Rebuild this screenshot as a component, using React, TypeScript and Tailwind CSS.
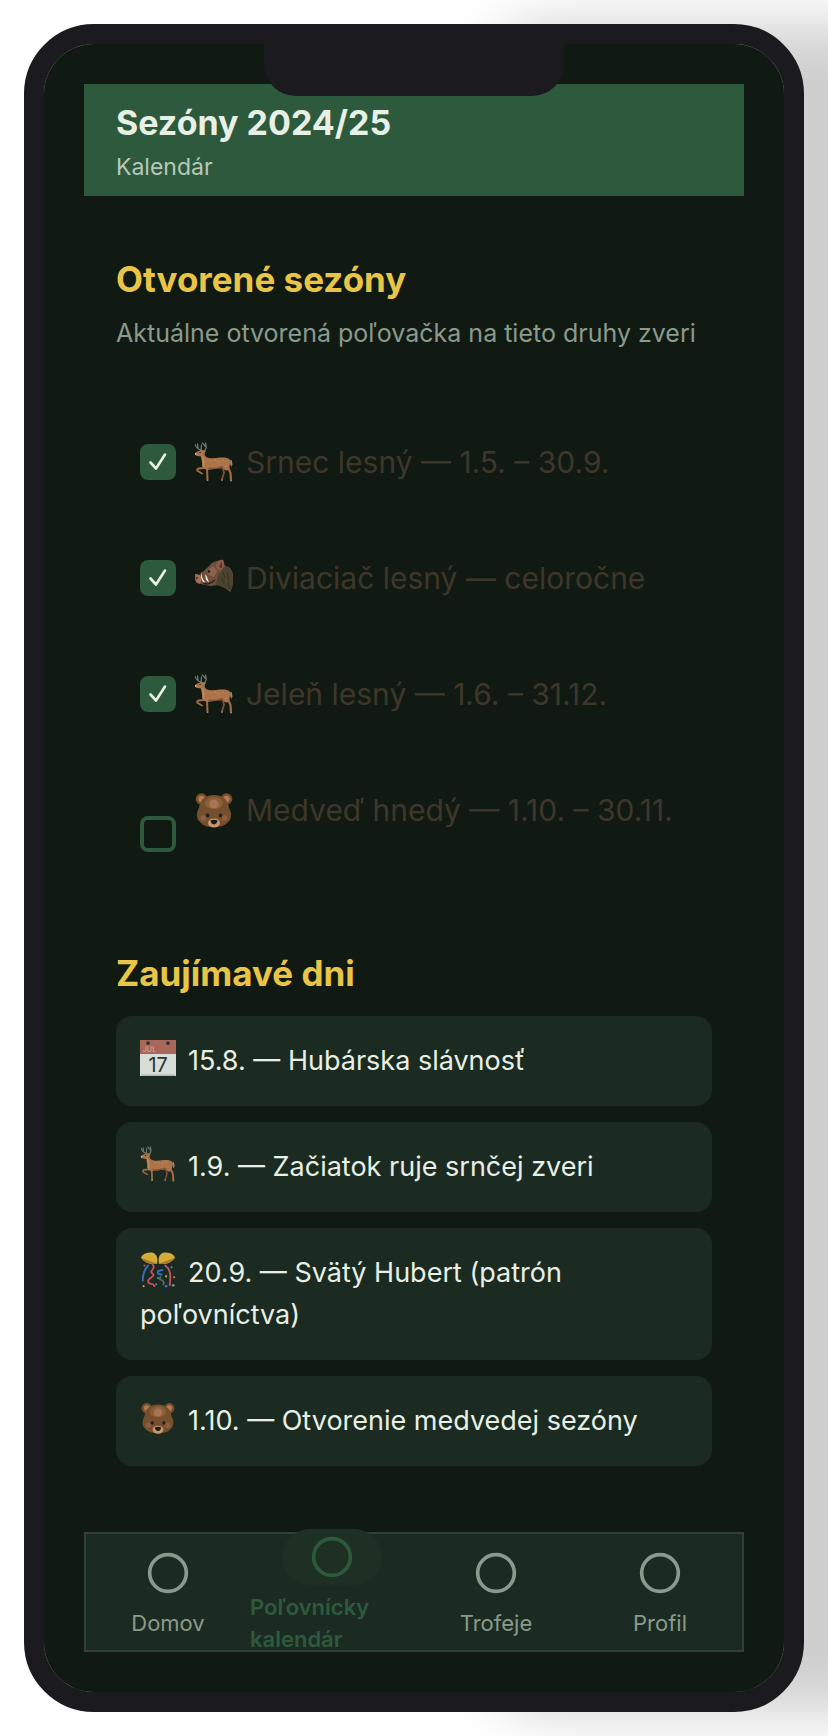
import type { ReactNode } from "react";
import { Circle } from "lucide-react";
import { clsx } from "clsx";

type EmojiName = "deer" | "boar" | "bear" | "calendar" | "confetti";

type Season = {
  id: string;
  emoji: EmojiName;
  label: string;
  open: boolean;
  tall?: boolean;
};

const seasons: Season[] = [
  { id: "srnec", emoji: "deer", label: "Srnec lesný — 1.5. – 30.9.", open: true },
  { id: "diviak", emoji: "boar", label: "Diviaciač lesný — celoročne", open: true },
  { id: "jelen", emoji: "deer", label: "Jeleň lesný — 1.6. – 31.12.", open: true },
  { id: "medved", emoji: "bear", label: "Medveď hnedý — 1.10. – 30.11.", open: false, tall: true },
];

const events: { emoji: EmojiName; label: string }[] = [
  { emoji: "calendar", label: "15.8. — Hubárska slávnosť" },
  { emoji: "deer", label: "1.9. — Začiatok ruje srnčej zveri" },
  { emoji: "confetti", label: "20.9. — Svätý Hubert (patrón poľovníctva)" },
  { emoji: "bear", label: "1.10. — Otvorenie medvedej sezóny" },
];

const tabs = [
  { label: "Domov", active: false },
  { label: "Poľovnícky kalendár", active: true },
  { label: "Trofeje", active: false },
  { label: "Profil", active: false },
];

const drawings: Record<EmojiName, ReactNode> = {
  deer: (
    <>
      <g fill="none" stroke="#6d766b" strokeWidth="1.3" strokeLinecap="round">
        <path d="M9 9C5 8 2 6 1.500 3M4 6.500L3.500 2M7 8L7.500 3M10 9C13 7 12.500 4 11.500 1M12 5L8.500 1" />
      </g>
      <g fill="none" stroke="#a26a43" strokeLinecap="round" strokeLinejoin="round">
        <path d="M29 26L30 31L28 37" stroke="#7d5136" strokeWidth="1.800" />
        <path d="M11 26L4 26.500L3 28.500L8 31.500" strokeWidth="1.800" />
        <path d="M13 26L13.500 38" strokeWidth="2" />
        <path d="M34 25L36.500 31L37 38" strokeWidth="2.200" />
      </g>
      <path
        d="M1 11.500C2.500 9.500 5 8.500 7 8.500L12 8.500L10.500 11.500C10.500 14 12 15.500 15 16C21 17 26 15 32 15.800C36.500 16.500 37.800 20 38 25C36.500 24 36 22 35.700 21C36 25 35 28 32.500 28.500C30 28 29 26 26 26C21 27 18 27 14 28C10 27.500 7.500 25 8 21L7 14.500C5 14 2 14 1 13Z"
        fill="#ac744a"
      />
      <path d="M15 25.500C20 26.500 25 25 28 24L31 27.500C28 26 22 26.500 14 28Z" fill="#805437" />
      <path d="M8.500 14L10 21L9 25" fill="none" stroke="#c98d60" strokeWidth="1.300" />
      <path d="M1 10.800L3 11.800L1.200 13Z" fill="#d9c8b1" />
      <circle cx="6" cy="10.500" r=".7" fill="#241b15" />
      <g fill="#d99755">
        <circle cx="17" cy="19" r=".6" />
        <circle cx="21" cy="18.500" r=".6" />
        <circle cx="25" cy="19.500" r=".6" />
        <circle cx="29" cy="18" r=".6" />
      </g>
      <path d="M37 18L38 23M13.500 37.500V39M28 37V39M37 38V39.500" stroke="#879087" strokeWidth="1.300" />
    </>
  ),
  boar: (
    <>
      <path
        d="M1 16L5 17L12 11L17 6C20 3 25 2 29 2L31 8C35 8 39 12 39 18L38.500 28L36 34L31 30L24 27L17 28L10 27L7 26L3 25L1 22Z"
        fill="#6d4f3c"
      />
      <path d="M24 17C27 14 30 9 32 8C37 10 39 15 39 22L38 30L36 34L31 29L22 27Z" fill="#4b432f" />
      <path d="M22 8C23 3 27 1 29 2C31 6 30 10 27 12C24 12 22 11 22 8Z" fill="#8c5c48" />
      <path d="M25 9L28 3.500L28 10Z" fill="#4a3228" />
      <path d="M13 13L19 8L23 13L20 19L15 17Z" fill="#8f6250" />
      <path d="M1 16L6 17L8 21L6 26L2 24Z" fill="#a36d57" />
      <circle cx="3" cy="20" r="1" fill="#442921" />
      <circle cx="15" cy="13.500" r="1.300" fill="#181b19" />
      <path d="M7 13C7.500 17 8 21 11 24C9 25 6.500 22 7 13ZM11.500 16C11 20 12 23 15 24.500C14 21 13 19 11.500 16Z" fill="#ecece3" />
      <path d="M9 25.500C14 27 17 25 21 22" fill="none" stroke="#241d19" strokeWidth="1.300" />
      <path d="M29 14L31 20M33 14L35 23M28 20L30 26M34 24L36 31" stroke="#33311f" strokeWidth="1" />
    </>
  ),
  bear: (
    <>
      <circle cx="7.500" cy="9" r="5.800" fill="#76502c" />
      <circle cx="32.500" cy="9" r="5.800" fill="#76502c" />
      <circle cx="7.500" cy="9" r="3.200" fill="#b87954" />
      <circle cx="32.500" cy="9" r="3.200" fill="#b87954" />
      <path d="M20 5C29 5 34 10 35 18C38 23 38 29 34 32C31 36 26 37 20 37C14 37 9 36 6 32C2 29 2 23 5 18C6 10 11 5 20 5Z" fill="#76502c" />
      <ellipse cx="20" cy="13" rx="9" ry="6" fill="#8c6039" />
      <circle cx="20" cy="14" r="4.500" fill="#ab7355" />
      <circle cx="9.500" cy="28" r="3" fill="#8f5d41" />
      <circle cx="30.500" cy="28" r="3" fill="#8f5d41" />
      <ellipse cx="20" cy="33" rx="6" ry="4.500" fill="#c7966b" />
      <circle cx="13.500" cy="25.500" r="1.900" fill="#20221e" />
      <circle cx="26.500" cy="25.500" r="1.900" fill="#20221e" />
      <path d="M16.500 30.500Q20 29 23.500 30.500Q23 34 20 34.500Q17 34 16.500 30.500Z" fill="#171b18" />
    </>
  ),
  calendar: (
    <>
      <path d="M0 0H40V40H0Z" fill="#d8ded7" />
      <path d="M0 0H40V15.500H0Z" fill="#a9665a" />
      <circle cx="9" cy="3.500" r="2" fill="#26372d" />
      <circle cx="31" cy="3.500" r="2" fill="#26372d" />
      <text x="3" y="13" fontSize="8" fontFamily="Inter, sans-serif" fill="#d6b08f">JUL</text>
      <path d="M1 39H39" stroke="#aab4ab" strokeWidth="1.500" />
      <text x="20" y="35.500" textAnchor="middle" fontSize="22" fontFamily="Inter, sans-serif" fill="#27352d">17</text>
    </>
  ),
  confetti: (
    <>
      <path d="M1 6C4 1 10 0 15 1C19 3 20 7 19 13C12 14 5 12 1 6Z" fill="#d6ac38" />
      <path d="M39 6C36 1 30 0 25 1C21 3 20 7 21 13C28 14 35 12 39 6Z" fill="#d6ac38" />
      <path d="M1 6C7 9 13 10 19 13C12 14 5 12 1 6ZM39 6C33 9 27 10 21 13C28 14 35 12 39 6Z" fill="#a67d2a" />
      <g fill="none" strokeLinecap="round" strokeWidth="2">
        <path d="M9 15C4 20 3 26 3 32" stroke="#386fc6" />
        <path d="M14 14C19 18 9 21 14 24C18 27 8 29 9 33C10 37 15 34 16 38" stroke="#cf4e60" />
        <path d="M28 15C35 20 34 27 33 37" stroke="#cf4e60" />
        <path d="M25 20C17 21 19 25 24 25" stroke="#386fc6" />
        <path d="M23 28C18 32 29 30 26 36" stroke="#596b5d" />
      </g>
      <circle cx="5" cy="15" r="1.200" fill="#cf4e60" />
      <circle cx="20" cy="29" r="1.200" fill="#38987a" />
      <circle cx="29" cy="27" r="1.200" fill="#dfb842" />
      <circle cx="38" cy="28" r="1.200" fill="#ad764c" />
      <circle cx="4" cy="38" r="1.200" fill="#d39c3e" />
      <circle cx="29" cy="38" r="1.500" fill="#386fc6" />
      <circle cx="37" cy="37" r="1.500" fill="#89927e" />
      <circle cx="18" cy="36" r="1.200" fill="#587d9c" />
      <circle cx="35" cy="17" r="1.200" fill="#468ab9" />
    </>
  ),
};

function Emoji({ name, className }: { name: EmojiName; className: string }) {
  return (
    <svg viewBox="0 0 40 40" className={className} aria-hidden="true">
      {drawings[name]}
    </svg>
  );
}

function SeasonRow({ season }: { season: Season }) {
  return (
    <li
      className={clsx(
        "flex items-center gap-[18px] px-6 py-[34px]",
        season.tall ? "min-h-[164px]" : "min-h-[116px]",
      )}
    >
      <span className="grid size-9 shrink-0">
        <input
          id={season.id}
          type="checkbox"
          defaultChecked={season.open}
          className="peer col-start-1 row-start-1 size-9 appearance-none rounded-lg border-4 border-[#2d5a3d] checked:bg-[#2d5a3d]"
        />
        <svg
          viewBox="0 0 36 36"
          className="pointer-events-none col-start-1 row-start-1 hidden size-9 peer-checked:block"
          fill="none"
          stroke="#e8efe5"
          strokeWidth="2.600"
          strokeLinecap="round"
          strokeLinejoin="round"
          aria-hidden="true"
        >
          <path d="M10.500 18.500L16 24.500L25 10.500" />
        </svg>
      </span>
      <label
        htmlFor={season.id}
        className={clsx(
          "flex flex-1 items-start gap-3 text-[30px] leading-[48px] text-[#3e3729]",
          season.tall && "min-h-24",
        )}
      >
        <Emoji name={season.emoji} className="mt-1 size-10 shrink-0" />
        <span>{season.label}</span>
      </label>
    </li>
  );
}

function TabBar() {
  return (
    <nav className="grid h-[120px] grid-cols-4 grid-rows-[116px] items-center border-2 border-[#2d4234] bg-[#1b2b21]">
      {tabs.map((tab) => (
        <button
          key={tab.label}
          type="button"
          aria-current={tab.active ? "page" : undefined}
          className={clsx(
            "flex flex-col items-center gap-1.5 text-left text-[22px] leading-8",
            tab.active ? "font-semibold text-[#2d5a3d]" : "text-[#8a9a8c]",
          )}
        >
          <span
            className={clsx(
              "flex h-14 w-[100px] items-center justify-center rounded-full",
              tab.active && "bg-[#1e3024]",
            )}
          >
            <Circle className="size-11" strokeWidth={2} />
          </span>
          <span>{tab.label}</span>
        </button>
      ))}
    </nav>
  );
}

export default function App() {
  return (
    <div className="overflow-hidden bg-white p-6 font-['Inter','Liberation_Sans',sans-serif]">
      <div className="rounded-[70px] border-[20px] border-[#1b1a1e] bg-[#8a9a8c] shadow-[460px_0_60px_#cfcfcf]">
        <div className="relative rounded-[50px] bg-[#101a13] p-10">
          <div className="absolute top-0 left-1/2 h-[52px] w-[300px] -translate-x-1/2 rounded-b-[32px] bg-[#1b1a1e]" />

          <header className="bg-[#2d5a3d] px-8 pt-3.5 pb-2.5">
            <h1 className="text-[34px] leading-[50px] font-bold text-[#e8efe5]">
              Sezóny 2024/25
            </h1>
            <p className="text-[23px] leading-[38px] text-[#b9c8ba]">Kalendár</p>
          </header>

          <main className="px-8 pt-[58px] pb-[66px]">
            <h2 className="text-[35px] leading-[50px] font-bold text-[#e8c547]">
              Otvorené sezóny
            </h2>
            <p className="mt-2 text-[25px] leading-[42px] text-[#8a9a8c]">
              Aktuálne otvorená poľovačka na tieto druhy zveri
            </p>

            <ul className="mt-[50px]">
              {seasons.map((season) => (
                <SeasonRow key={season.id} season={season} />
              ))}
            </ul>

            <h2 className="mt-8 text-[35px] leading-[50px] font-bold text-[#e8c547]">
              Zaujímavé dni
            </h2>
            <ul className="mt-[18px] flex flex-col gap-4">
              {events.map((event) => (
                <li
                  key={event.label}
                  className="rounded-2xl bg-[#1b2b21] p-6 text-[27px] leading-[42px] text-[#e8efe5]"
                >
                  <Emoji name={event.emoji} className="mr-3 inline-block size-9 align-[-6px]" />
                  {event.label}
                </li>
              ))}
            </ul>
          </main>

          <TabBar />
        </div>
      </div>
    </div>
  );
}
